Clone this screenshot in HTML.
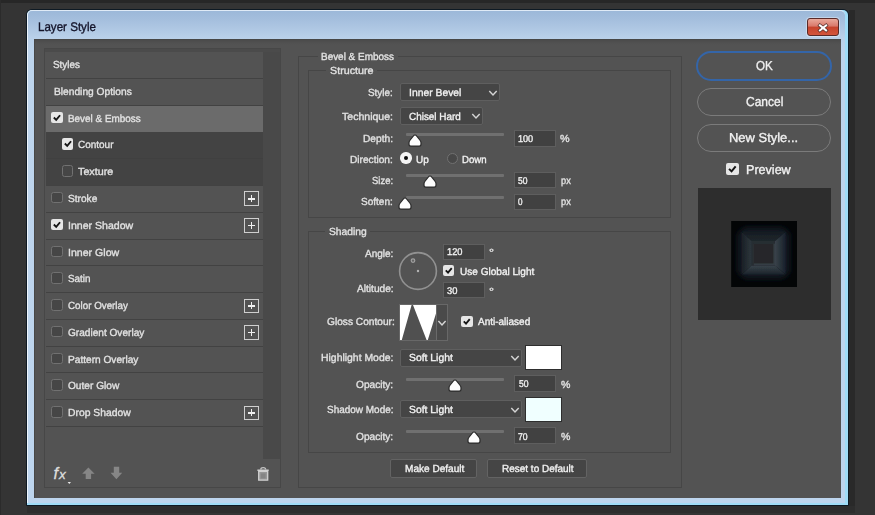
<!DOCTYPE html>
<html><head><meta charset="utf-8"><title>Layer Style</title>
<style>
html,body{margin:0;padding:0;background:#343434}
body{width:875px;height:515px;overflow:hidden;position:relative;font-family:"Liberation Sans",sans-serif}
#r{position:absolute;left:0;top:0;width:875px;height:515px;overflow:hidden}
#r div,#r svg,#r span{position:absolute}
.t{white-space:pre;line-height:1;text-rendering:geometricPrecision;-webkit-text-stroke:0.35px currentColor;transform-origin:0 0;font-family:"Liberation Sans",sans-serif}
</style></head><body><div id="r">
<div style="left:0px;top:0px;width:875px;height:515px;background:#343434"></div>
<div style="left:0px;top:0px;width:875px;height:2.5px;background:#272727"></div>
<div style="left:0px;top:0px;width:1px;height:515px;background:#2b2b2b"></div>
<div style="left:849px;top:10px;width:6px;height:503px;background:#292929"></div>
<div style="left:27px;top:506px;width:828px;height:7px;background:#2d2d2d"></div>
<div style="left:26px;top:9px;width:823px;height:497px;background:#0e1a24;border-radius:6px 6px 1px 1px"></div>
<div style="left:27px;top:10px;width:821px;height:495px;background:#9fdcf7;border-radius:5px 5px 0 0"></div>
<div style="left:27px;top:10px;width:817.5px;height:493px;background:linear-gradient(180deg,#9cb8d9 0px,#a4bedd 8px,#b9d0e9 27px,#bdd4ec 40px,#bdd5ee 100%);border-radius:5px 5px 0 0;border-left:1.5px solid #eef4fb;border-top:1px solid #dfeaf6;box-sizing:border-box"></div>
<div style="left:34px;top:39px;width:807px;height:459px;background:linear-gradient(180deg,#444 0px,#4c4c4c 1.5px,#515151 4px,#535353 6px);border-left:1px solid #474747;box-sizing:border-box"></div>
<div style="left:807px;top:18px;width:32px;height:18px;background:linear-gradient(180deg,#e9a99b 0%,#d9786a 45%,#c6432c 50%,#d2553c 100%);border:1px solid #5a2a28;border-radius:3px;box-sizing:border-box;box-shadow:0 0 0 1px rgba(255,255,255,.35)"></div>
<svg style="left:816.3px;top:21.6px" width="14" height="12" viewBox="0 0 14 12"><path d="M3.9 3.4 L10.1 8.4 M10.1 3.4 L3.9 8.4" stroke="#55302c" stroke-width="3.5" stroke-linecap="square"/><path d="M3.9 3.4 L10.1 8.4 M10.1 3.4 L3.9 8.4" stroke="#fff" stroke-width="2" stroke-linecap="square"/></svg>
<div style="left:44px;top:48px;width:237px;height:440px;border:1px solid #474747;box-sizing:border-box"></div>
<div style="left:45px;top:49px;width:235px;height:3px;background:#4b4b4b"></div>
<div style="left:46px;top:52px;width:217px;height:407px;background:#535353"></div>
<div style="left:262.5px;top:52px;width:17px;height:407px;background:#494949"></div>
<div style="left:46px;top:106px;width:216.5px;height:26px;background:#6b6b6b"></div>
<div style="left:46px;top:131.5px;width:216.5px;height:27.5px;background:#434343"></div>
<div style="left:46px;top:158.5px;width:216.5px;height:27.5px;background:#434343"></div>
<div style="left:46px;top:78px;width:216.5px;height:1px;background:#424242"></div>
<div style="left:46px;top:105px;width:216.5px;height:1px;background:#424242"></div>
<div style="left:46px;top:185px;width:216.5px;height:1px;background:#424242"></div>
<div style="left:46px;top:212px;width:216.5px;height:1px;background:#424242"></div>
<div style="left:46px;top:239px;width:216.5px;height:1px;background:#424242"></div>
<div style="left:46px;top:265px;width:216.5px;height:1px;background:#424242"></div>
<div style="left:46px;top:292px;width:216.5px;height:1px;background:#424242"></div>
<div style="left:46px;top:319px;width:216.5px;height:1px;background:#424242"></div>
<div style="left:46px;top:346px;width:216.5px;height:1px;background:#424242"></div>
<div style="left:46px;top:372px;width:216.5px;height:1px;background:#424242"></div>
<div style="left:46px;top:399px;width:216.5px;height:1px;background:#424242"></div>
<div style="left:46px;top:426px;width:216.5px;height:1px;background:#424242"></div>
<div style="left:46px;top:158.27999999999997px;width:216.5px;height:1.0px;background:#404040"></div>
<div style="left:51.2px;top:111.5px;width:11.8px;height:11.8px;background:#e6e6e6;border-radius:2px"></div><svg style="left:51.2px;top:111.5px" width="11.8" height="11.8" viewBox="0 0 12 12"><path d="M2.9 5.6 L5.3 8 L9.2 3.3" fill="none" stroke="#151515" stroke-width="1.9"/></svg>
<div style="left:61.5px;top:138.0px;width:11.8px;height:11.8px;background:#e6e6e6;border-radius:2px"></div><svg style="left:61.5px;top:138.0px" width="11.8" height="11.8" viewBox="0 0 12 12"><path d="M2.9 5.6 L5.3 8 L9.2 3.3" fill="none" stroke="#151515" stroke-width="1.9"/></svg>
<div style="left:61.5px;top:165.0px;width:11.8px;height:11.8px;background:#464646;border:1px solid #717171;border-radius:2.5px;box-sizing:border-box"></div>
<div style="left:51.2px;top:191.5px;width:11.8px;height:11.8px;background:#464646;border:1px solid #717171;border-radius:2.5px;box-sizing:border-box"></div>
<div style="left:51.2px;top:218.5px;width:11.8px;height:11.8px;background:#e6e6e6;border-radius:2px"></div><svg style="left:51.2px;top:218.5px" width="11.8" height="11.8" viewBox="0 0 12 12"><path d="M2.9 5.6 L5.3 8 L9.2 3.3" fill="none" stroke="#151515" stroke-width="1.9"/></svg>
<div style="left:51.2px;top:245.5px;width:11.8px;height:11.8px;background:#464646;border:1px solid #717171;border-radius:2.5px;box-sizing:border-box"></div>
<div style="left:51.2px;top:272.0px;width:11.8px;height:11.8px;background:#464646;border:1px solid #717171;border-radius:2.5px;box-sizing:border-box"></div>
<div style="left:51.2px;top:299.0px;width:11.8px;height:11.8px;background:#464646;border:1px solid #717171;border-radius:2.5px;box-sizing:border-box"></div>
<div style="left:51.2px;top:325.5px;width:11.8px;height:11.8px;background:#464646;border:1px solid #717171;border-radius:2.5px;box-sizing:border-box"></div>
<div style="left:51.2px;top:352.5px;width:11.8px;height:11.8px;background:#464646;border:1px solid #717171;border-radius:2.5px;box-sizing:border-box"></div>
<div style="left:51.2px;top:379.0px;width:11.8px;height:11.8px;background:#464646;border:1px solid #717171;border-radius:2.5px;box-sizing:border-box"></div>
<div style="left:51.2px;top:406.0px;width:11.8px;height:11.8px;background:#464646;border:1px solid #717171;border-radius:2.5px;box-sizing:border-box"></div>
<div style="left:244px;top:191.4px;width:14.8px;height:14.4px;border:1.1px solid #cfcfcf;box-sizing:border-box"></div>
<div style="left:247.9px;top:197.8px;width:7px;height:1.8px;background:#f0f0f0"></div>
<div style="left:250.5px;top:195.1px;width:1.8px;height:7px;background:#f0f0f0"></div>
<div style="left:244px;top:218.2px;width:14.8px;height:14.4px;border:1.1px solid #cfcfcf;box-sizing:border-box"></div>
<div style="left:247.9px;top:224.5px;width:7px;height:1.8px;background:#f0f0f0"></div>
<div style="left:250.5px;top:221.9px;width:1.8px;height:7px;background:#f0f0f0"></div>
<div style="left:244px;top:298.5px;width:14.8px;height:14.4px;border:1.1px solid #cfcfcf;box-sizing:border-box"></div>
<div style="left:247.9px;top:304.8px;width:7px;height:1.8px;background:#f0f0f0"></div>
<div style="left:250.5px;top:302.2px;width:1.8px;height:7px;background:#f0f0f0"></div>
<div style="left:244px;top:325.3px;width:14.8px;height:14.4px;border:1.1px solid #cfcfcf;box-sizing:border-box"></div>
<div style="left:247.9px;top:331.6px;width:7px;height:1.8px;background:#f0f0f0"></div>
<div style="left:250.5px;top:329.0px;width:1.8px;height:7px;background:#f0f0f0"></div>
<div style="left:244px;top:405.6px;width:14.8px;height:14.4px;border:1.1px solid #cfcfcf;box-sizing:border-box"></div>
<div style="left:247.9px;top:411.9px;width:7px;height:1.8px;background:#f0f0f0"></div>
<div style="left:250.5px;top:409.3px;width:1.8px;height:7px;background:#f0f0f0"></div>
<svg style="left:52px;top:464px" width="22" height="24" viewBox="0 0 22 24"><text x="1.4" y="15.4" font-family="Liberation Sans,sans-serif" font-style="italic" font-size="16.5" fill="#dedede" stroke="#dedede" stroke-width="0.3">f</text><text x="7" y="15.2" font-family="Liberation Sans,sans-serif" font-style="italic" font-size="13.5" fill="#dedede" stroke="#dedede" stroke-width="0.3">x</text><path d="M15.6 18 L19 18 L17.3 20 Z" fill="#e8e8e8"/></svg>
<svg style="left:80.6px;top:466px" width="16" height="16" viewBox="0 0 16 16"><path d="M7.4 1.6 L13.6 7.8 L10.1 7.8 L10.1 13 L4.7 13 L4.7 7.8 L1.2 7.8 Z" fill="#868686"/></svg>
<svg style="left:108.6px;top:466px" width="16" height="16" viewBox="0 0 16 16"><path d="M7.4 13.2 L13.2 6.8 L10.2 6.8 L10.2 0.8 L4.8 0.8 L4.8 6.8 L1.6 6.8 Z" fill="#868686"/></svg>
<svg style="left:256px;top:466px" width="15" height="16" viewBox="0 0 15 16"><path d="M4.8 3.6 Q4.8 1.6 7.2 1.6 Q9.7 1.6 9.7 3.6" fill="none" stroke="#c4c4c4" stroke-width="1.3"/><path d="M1.4 3.5 h11.3 v1.6 h-11.3 z" fill="#d2d2d2"/><path d="M2.7 5.4 h9 v8.8 h-9 z" fill="#979797" stroke="#d0d0d0" stroke-width="1.3"/><rect x="4.8" y="7.4" width="4.8" height="5" fill="#858585"/></svg>
<div style="left:297.5px;top:55.5px;width:384px;height:432.5px;border:1.3px solid #464646;box-sizing:border-box;box-shadow:inset 0 0 0 0 #000"></div>
<div style="left:318px;top:50px;width:80px;height:12px;background:#535353"></div>
<div style="left:308px;top:70px;width:362.8px;height:148px;border:1.3px solid #464646;box-sizing:border-box;box-shadow:inset 0 0 0 0 #000"></div>
<div style="left:326px;top:64px;width:51px;height:12px;background:#535353"></div>
<div style="left:308px;top:230.7px;width:362.8px;height:222.3px;border:1.3px solid #464646;box-sizing:border-box;box-shadow:inset 0 0 0 0 #000"></div>
<div style="left:325px;top:225px;width:45px;height:12px;background:#535353"></div>
<div style="left:399.6px;top:82.6px;width:100.6px;height:18.6px;background:#454545;border:1.5px solid #5f5f5f;box-sizing:border-box;border-radius:2px"></div>
<svg style="left:486.6px;top:87.6px" width="12" height="10" viewBox="0 0 12 10"><path d="M2.3 3.0 L6 7.0 L9.7 3.0" fill="none" stroke="#d4d4d4" stroke-width="1.45"/></svg>
<div style="left:399.6px;top:106.8px;width:83.8px;height:18.6px;background:#454545;border:1.5px solid #5f5f5f;box-sizing:border-box;border-radius:2px"></div>
<svg style="left:470.2px;top:111.4px" width="12" height="10" viewBox="0 0 12 10"><path d="M2.3 3.0 L6 7.0 L9.7 3.0" fill="none" stroke="#d4d4d4" stroke-width="1.45"/></svg>
<div style="left:399.6px;top:348.5px;width:122.2px;height:18.8px;background:#454545;border:1.5px solid #5f5f5f;box-sizing:border-box;border-radius:2px"></div>
<svg style="left:509.20000000000005px;top:353.4px" width="12" height="10" viewBox="0 0 12 10"><path d="M2.3 3.0 L6 7.0 L9.7 3.0" fill="none" stroke="#d4d4d4" stroke-width="1.45"/></svg>
<div style="left:399.6px;top:400px;width:122.2px;height:18.4px;background:#454545;border:1.5px solid #5f5f5f;box-sizing:border-box;border-radius:2px"></div>
<svg style="left:509.20000000000005px;top:404.8px" width="12" height="10" viewBox="0 0 12 10"><path d="M2.3 3.0 L6 7.0 L9.7 3.0" fill="none" stroke="#d4d4d4" stroke-width="1.45"/></svg>
<div style="left:514.3px;top:130.2px;width:42.2px;height:16.6px;background:#414141;border:1px solid #5e5e5e;box-sizing:border-box"></div>
<div style="left:514.3px;top:171.6px;width:42.2px;height:16.6px;background:#414141;border:1px solid #5e5e5e;box-sizing:border-box"></div>
<div style="left:514.3px;top:193.6px;width:42.2px;height:16.6px;background:#414141;border:1px solid #5e5e5e;box-sizing:border-box"></div>
<div style="left:514.3px;top:375.4px;width:42.2px;height:16.6px;background:#414141;border:1px solid #5e5e5e;box-sizing:border-box"></div>
<div style="left:514.3px;top:427.2px;width:42.2px;height:16.6px;background:#414141;border:1px solid #5e5e5e;box-sizing:border-box"></div>
<div style="left:443.3px;top:243.6px;width:41.6px;height:16px;background:#414141;border:1px solid #5e5e5e;box-sizing:border-box"></div>
<div style="left:443.3px;top:282.4px;width:41.6px;height:16px;background:#414141;border:1px solid #5e5e5e;box-sizing:border-box"></div>
<div style="left:405.5px;top:133px;width:98px;height:3px;background:#707070;border-radius:1px"></div><svg style="left:407.2px;top:133px" width="16" height="15" viewBox="0 0 16 15"><path d="M8 2 Q9 2 9.8 3.1 L13.2 7.5 Q14 8.6 14 9.8 L14 11.2 Q14 13.1 12.1 13.1 L3.9 13.1 Q2 13.1 2 11.2 L2 9.8 Q2 8.6 2.8 7.5 L6.2 3.1 Q7 2 8 2 Z" fill="#fdfdfd" stroke="#2b2b2b" stroke-width="1.2"/></svg>
<div style="left:405.5px;top:173.9px;width:98px;height:3px;background:#707070;border-radius:1px"></div><svg style="left:422.4px;top:173.9px" width="16" height="15" viewBox="0 0 16 15"><path d="M8 2 Q9 2 9.8 3.1 L13.2 7.5 Q14 8.6 14 9.8 L14 11.2 Q14 13.1 12.1 13.1 L3.9 13.1 Q2 13.1 2 11.2 L2 9.8 Q2 8.6 2.8 7.5 L6.2 3.1 Q7 2 8 2 Z" fill="#fdfdfd" stroke="#2b2b2b" stroke-width="1.2"/></svg>
<div style="left:405.5px;top:195.6px;width:98px;height:3px;background:#707070;border-radius:1px"></div><svg style="left:396.8px;top:195.6px" width="16" height="15" viewBox="0 0 16 15"><path d="M8 2 Q9 2 9.8 3.1 L13.2 7.5 Q14 8.6 14 9.8 L14 11.2 Q14 13.1 12.1 13.1 L3.9 13.1 Q2 13.1 2 11.2 L2 9.8 Q2 8.6 2.8 7.5 L6.2 3.1 Q7 2 8 2 Z" fill="#fdfdfd" stroke="#2b2b2b" stroke-width="1.2"/></svg>
<div style="left:405.5px;top:377.9px;width:98px;height:3px;background:#707070;border-radius:1px"></div><svg style="left:446.5px;top:377.9px" width="16" height="15" viewBox="0 0 16 15"><path d="M8 2 Q9 2 9.8 3.1 L13.2 7.5 Q14 8.6 14 9.8 L14 11.2 Q14 13.1 12.1 13.1 L3.9 13.1 Q2 13.1 2 11.2 L2 9.8 Q2 8.6 2.8 7.5 L6.2 3.1 Q7 2 8 2 Z" fill="#fdfdfd" stroke="#2b2b2b" stroke-width="1.2"/></svg>
<div style="left:405.5px;top:430.2px;width:98px;height:3px;background:#707070;border-radius:1px"></div><svg style="left:465.9px;top:430.2px" width="16" height="15" viewBox="0 0 16 15"><path d="M8 2 Q9 2 9.8 3.1 L13.2 7.5 Q14 8.6 14 9.8 L14 11.2 Q14 13.1 12.1 13.1 L3.9 13.1 Q2 13.1 2 11.2 L2 9.8 Q2 8.6 2.8 7.5 L6.2 3.1 Q7 2 8 2 Z" fill="#fdfdfd" stroke="#2b2b2b" stroke-width="1.2"/></svg>
<div style="left:400.3px;top:152.4px;width:11.4px;height:11.4px;background:#f4f4f4;border-radius:50%"></div>
<div style="left:403.7px;top:155.8px;width:4.6px;height:4.6px;background:#0a0a0a;border-radius:50%"></div>
<div style="left:446.6px;top:152.6px;width:11.4px;height:11.4px;background:#484848;border:1px solid #717171;box-sizing:border-box;border-radius:50%"></div>
<svg style="left:396px;top:249px" width="44" height="44" viewBox="0 0 44 44"><circle cx="22" cy="22" r="18.4" fill="none" stroke="#919191" stroke-width="1.6"/><circle cx="17" cy="11.6" r="1.8" fill="#666" stroke="#a0a0a0" stroke-width="1.2"/><circle cx="22" cy="22" r="1.2" fill="#b4b4b4"/></svg>
<div style="left:443px;top:264.8px;width:11.4px;height:11.4px;background:#e6e6e6;border-radius:2px"></div><svg style="left:443px;top:264.8px" width="11.4" height="11.4" viewBox="0 0 12 12"><path d="M2.9 5.6 L5.3 8 L9.2 3.3" fill="none" stroke="#151515" stroke-width="1.9"/></svg>
<div style="left:461.2px;top:315.8px;width:11.4px;height:11.4px;background:#e6e6e6;border-radius:2px"></div><svg style="left:461.2px;top:315.8px" width="11.4" height="11.4" viewBox="0 0 12 12"><path d="M2.9 5.6 L5.3 8 L9.2 3.3" fill="none" stroke="#151515" stroke-width="1.9"/></svg>
<div style="left:726.4px;top:162.6px;width:12.6px;height:12.6px;background:#e6e6e6;border-radius:2px"></div><svg style="left:726.4px;top:162.6px" width="12.6" height="12.6" viewBox="0 0 12 12"><path d="M2.9 5.6 L5.3 8 L9.2 3.3" fill="none" stroke="#151515" stroke-width="1.9"/></svg>
<div style="left:399.4px;top:304px;width:49px;height:36.6px;background:#4a4a4a;border:1px solid #686868;box-sizing:border-box"></div>
<svg style="left:400.2px;top:304.8px" width="36" height="35" viewBox="0 0 36 35"><rect width="36" height="35" fill="#fff"/><path d="M1.8 35 L11.6 0 L13 0 L26.6 35 Z M27.8 35 L36 8.5 L36 35 Z" fill="#505050"/></svg>
<div style="left:436.2px;top:304.8px;width:0.8px;height:35px;background:#6a6a6a"></div>
<svg style="left:436.4px;top:318.4px" width="12" height="10" viewBox="0 0 12 10"><path d="M2.4 3.1 L6 6.9 L9.6 3.1" fill="none" stroke="#d6d6d6" stroke-width="1.45"/></svg>
<div style="left:525.4px;top:345px;width:36.6px;height:25px;background:#ffffff;border:1px solid #2e2e2e;box-sizing:border-box"></div>
<div style="left:525.4px;top:397px;width:36.6px;height:25px;background:#f0ffff;border:1px solid #2e2e2e;box-sizing:border-box"></div>
<div style="left:389.8px;top:459.4px;width:87.6px;height:18.4px;background:#454545;border:1px solid #636363;box-sizing:border-box;border-radius:2px"></div>
<div style="left:486.8px;top:459.4px;width:100.4px;height:18.4px;background:#454545;border:1px solid #636363;box-sizing:border-box;border-radius:2px"></div>
<div style="left:696px;top:51px;width:136px;height:30px;border:2px solid #3465a8;border-radius:15px;box-sizing:border-box"></div>
<div style="left:697px;top:88px;width:134px;height:28px;border:1px solid #7b7b7b;border-radius:14px;box-sizing:border-box"></div>
<div style="left:697px;top:124px;width:134px;height:28px;border:1px solid #7b7b7b;border-radius:14px;box-sizing:border-box"></div>
<div style="left:697.5px;top:188px;width:133px;height:132px;background:#2d2d2d"></div>
<svg style="left:730.6px;top:221px" width="66.4" height="66" viewBox="0 0 66 66">
<defs><filter id="b1" x="-30%" y="-30%" width="160%" height="160%"><feGaussianBlur stdDeviation="3"/></filter>
<filter id="b2" x="-10%" y="-10%" width="120%" height="120%"><feGaussianBlur stdDeviation="0.7"/></filter>
<linearGradient id="fl" x1="0" x2="1" y1="0" y2="0"><stop offset="0" stop-color="#182026"/><stop offset="1" stop-color="#2e363c"/></linearGradient>
<linearGradient id="fr" x1="1" x2="0" y1="0" y2="0"><stop offset="0" stop-color="#18202a"/><stop offset="1" stop-color="#39434a"/></linearGradient>
<linearGradient id="fb" x1="0" x2="0" y1="1" y2="0"><stop offset="0" stop-color="#1b242b"/><stop offset="1" stop-color="#3a444b"/></linearGradient>
<linearGradient id="ft" x1="0" x2="0" y1="0" y2="1"><stop offset="0" stop-color="#151c22"/><stop offset="1" stop-color="#1f262b"/></linearGradient></defs>
<rect width="66" height="66" fill="#030506"/>
<rect x="7" y="7" width="51" height="50" rx="9" fill="#121d27" filter="url(#b1)"/>
<g filter="url(#b2)">
<path d="M11.2 10.2 L53.6 10.2 L43.8 20.2 L20.4 20.2 Z" fill="url(#ft)"/>
<path d="M10.4 11 L20.4 20.2 L20.4 44.4 L10.4 53 Z" fill="url(#fl)"/>
<path d="M54.4 11 L43.8 20.2 L43.8 44.4 L54.4 53 Z" fill="url(#fr)"/>
<path d="M11 53.6 L20.4 44.4 L43.8 44.4 L53.8 53.6 Z" fill="url(#fb)"/>
<rect x="20.3" y="20.1" width="23.5" height="24.3" fill="#363e44"/>
<path d="M20.3 20.1 h23.5 v2.6 h-21.2 v21.7 h-2.3 z" fill="#272d32"/>
<rect x="22.6" y="22.7" width="19.6" height="19.7" fill="#27282a"/>
</g>
</svg>
<span class="t" style="left:37.70px;top:20.92px;font-size:12.5px;color:#14142a;transform:scale(0.9259,1)">Layer Style</span>
<span class="t" style="left:53.00px;top:61.18px;font-size:10.3px;color:#e2e2e2;transform:scale(0.9627,1)">Styles</span>
<span class="t" style="left:53.50px;top:87.95px;font-size:10.3px;color:#e2e2e2;transform:scale(0.9919,1)">Blending Options</span>
<span class="t" style="left:68.00px;top:114.72px;font-size:10.3px;color:#e2e2e2;transform:scale(0.9623,1)">Bevel &amp; Emboss</span>
<span class="t" style="left:78.30px;top:141.49px;font-size:10.3px;color:#e2e2e2;transform:scale(0.9689,1)">Contour</span>
<span class="t" style="left:78.30px;top:168.26px;font-size:10.3px;color:#e2e2e2;transform:scale(1.0450,1)">Texture</span>
<span class="t" style="left:67.70px;top:195.03px;font-size:10.3px;color:#e2e2e2;transform:scale(0.9844,1)">Stroke</span>
<span class="t" style="left:67.70px;top:221.80px;font-size:10.3px;color:#e2e2e2;transform:scale(1.0260,1)">Inner Shadow</span>
<span class="t" style="left:67.70px;top:248.57px;font-size:10.3px;color:#e2e2e2;transform:scale(1.0282,1)">Inner Glow</span>
<span class="t" style="left:67.70px;top:275.34px;font-size:10.3px;color:#e2e2e2;transform:scale(0.9581,1)">Satin</span>
<span class="t" style="left:67.70px;top:302.11px;font-size:10.3px;color:#e2e2e2;transform:scale(0.9515,1)">Color Overlay</span>
<span class="t" style="left:67.70px;top:328.88px;font-size:10.3px;color:#e2e2e2;transform:scale(0.9802,1)">Gradient Overlay</span>
<span class="t" style="left:67.70px;top:355.65px;font-size:10.3px;color:#e2e2e2;transform:scale(0.9840,1)">Pattern Overlay</span>
<span class="t" style="left:67.70px;top:382.42px;font-size:10.3px;color:#e2e2e2;transform:scale(0.9831,1)">Outer Glow</span>
<span class="t" style="left:67.70px;top:409.19px;font-size:10.3px;color:#e2e2e2;transform:scale(1.0050,1)">Drop Shadow</span>
<span class="t" style="left:321.40px;top:52.78px;font-size:10.3px;color:#e2e2e2;transform:scale(0.9650,1)">Bevel &amp; Emboss</span>
<span class="t" style="left:330.20px;top:67.08px;font-size:10.3px;color:#e2e2e2;transform:scale(1.0411,1)">Structure</span>
<span class="t" style="left:329.10px;top:228.48px;font-size:10.3px;color:#e2e2e2;transform:scale(1.0001,1)">Shading</span>
<span class="t" style="left:368.40px;top:88.98px;font-size:10.3px;color:#e2e2e2;transform:scale(0.9625,1)">Style:</span>
<span class="t" style="left:342.20px;top:112.88px;font-size:10.3px;color:#e2e2e2;transform:scale(1.0238,1)">Technique:</span>
<span class="t" style="left:363.20px;top:135.48px;font-size:10.3px;color:#e2e2e2;transform:scale(0.9887,1)">Depth:</span>
<span class="t" style="left:350.40px;top:155.68px;font-size:10.3px;color:#e2e2e2;transform:scale(0.9839,1)">Direction:</span>
<span class="t" style="left:372.10px;top:177.08px;font-size:10.3px;color:#e2e2e2;transform:scale(0.9211,1)">Size:</span>
<span class="t" style="left:361.40px;top:198.48px;font-size:10.3px;color:#e2e2e2;transform:scale(0.9742,1)">Soften:</span>
<span class="t" style="left:364.80px;top:249.88px;font-size:10.3px;color:#e2e2e2;transform:scale(0.9725,1)">Angle:</span>
<span class="t" style="left:356.50px;top:285.48px;font-size:10.3px;color:#e2e2e2;transform:scale(0.9861,1)">Altitude:</span>
<span class="t" style="left:326.60px;top:318.38px;font-size:10.3px;color:#e2e2e2;transform:scale(0.9871,1)">Gloss Contour:</span>
<span class="t" style="left:320.80px;top:354.18px;font-size:10.3px;color:#e2e2e2;transform:scale(1.0119,1)">Highlight Mode:</span>
<span class="t" style="left:356.00px;top:380.78px;font-size:10.3px;color:#e2e2e2;transform:scale(0.9846,1)">Opacity:</span>
<span class="t" style="left:326.70px;top:406.18px;font-size:10.3px;color:#e2e2e2;transform:scale(0.9679,1)">Shadow Mode:</span>
<span class="t" style="left:356.00px;top:433.08px;font-size:10.3px;color:#e2e2e2;transform:scale(0.9846,1)">Opacity:</span>
<span class="t" style="left:408.60px;top:88.98px;font-size:10.3px;color:#f2f2f2;transform:scale(1.0059,1)">Inner Bevel</span>
<span class="t" style="left:408.60px;top:112.88px;font-size:10.3px;color:#f2f2f2;transform:scale(0.9629,1)">Chisel Hard</span>
<span class="t" style="left:518.40px;top:135.20px;font-size:9.8px;color:#f2f2f2;transform:scale(0.9291,1)">100</span>
<span class="t" style="left:560.30px;top:135.48px;font-size:10.3px;color:#e2e2e2;transform:scale(1.0485,1)">%</span>
<span class="t" style="left:416.20px;top:155.68px;font-size:10.3px;color:#f2f2f2;transform:scale(0.9718,1)">Up</span>
<span class="t" style="left:462.40px;top:155.68px;font-size:10.3px;color:#f2f2f2;transform:scale(0.9344,1)">Down</span>
<span class="t" style="left:518.40px;top:176.90px;font-size:9.8px;color:#f2f2f2;transform:scale(0.8711,1)">50</span>
<span class="t" style="left:560.50px;top:177.08px;font-size:10.3px;color:#e2e2e2;transform:scale(0.8999,1)">px</span>
<span class="t" style="left:518.40px;top:198.30px;font-size:9.8px;color:#f2f2f2;transform:scale(0.8252,1)">0</span>
<span class="t" style="left:560.50px;top:198.48px;font-size:10.3px;color:#e2e2e2;transform:scale(0.8999,1)">px</span>
<span class="t" style="left:447.10px;top:248.40px;font-size:9.8px;color:#f2f2f2;transform:scale(0.9475,1)">120</span>
<span class="t" style="left:488.90px;top:249.38px;font-size:10.3px;color:#e2e2e2;transform:scale(1.2121,1)">°</span>
<span class="t" style="left:459.90px;top:267.98px;font-size:10.3px;color:#f2f2f2;transform:scale(0.9758,1)">Use Global Light</span>
<span class="t" style="left:447.10px;top:287.40px;font-size:9.8px;color:#f2f2f2;transform:scale(0.9536,1)">30</span>
<span class="t" style="left:488.90px;top:288.38px;font-size:10.3px;color:#e2e2e2;transform:scale(1.2121,1)">°</span>
<span class="t" style="left:477.60px;top:318.38px;font-size:10.3px;color:#f2f2f2;transform:scale(0.9700,1)">Anti-aliased</span>
<span class="t" style="left:408.80px;top:354.18px;font-size:10.3px;color:#f2f2f2;transform:scale(1.0065,1)">Soft Light</span>
<span class="t" style="left:518.50px;top:380.20px;font-size:9.8px;color:#f2f2f2;transform:scale(0.8802,1)">50</span>
<span class="t" style="left:560.60px;top:380.78px;font-size:10.3px;color:#e2e2e2;transform:scale(1.0266,1)">%</span>
<span class="t" style="left:408.80px;top:406.18px;font-size:10.3px;color:#f2f2f2;transform:scale(1.0065,1)">Soft Light</span>
<span class="t" style="left:518.40px;top:432.80px;font-size:9.8px;color:#f2f2f2;transform:scale(0.8802,1)">70</span>
<span class="t" style="left:560.50px;top:433.08px;font-size:10.3px;color:#e2e2e2;transform:scale(1.0266,1)">%</span>
<span class="t" style="left:404.60px;top:464.58px;font-size:10.3px;color:#f2f2f2;transform:scale(0.9774,1)">Make Default</span>
<span class="t" style="left:501.60px;top:464.58px;font-size:10.3px;color:#f2f2f2;transform:scale(0.9696,1)">Reset to Default</span>
<span class="t" style="left:755.70px;top:58.90px;font-size:13px;color:#f2f2f2;transform:scale(0.8938,1)">OK</span>
<span class="t" style="left:745.60px;top:94.70px;font-size:13px;color:#f2f2f2;transform:scale(0.9217,1)">Cancel</span>
<span class="t" style="left:729.40px;top:130.70px;font-size:13px;color:#f2f2f2;transform:scale(0.9963,1)">New Style...</span>
<span class="t" style="left:746.00px;top:163.00px;font-size:13px;color:#f2f2f2;transform:scale(0.9665,1)">Preview</span>
</div></body></html>
